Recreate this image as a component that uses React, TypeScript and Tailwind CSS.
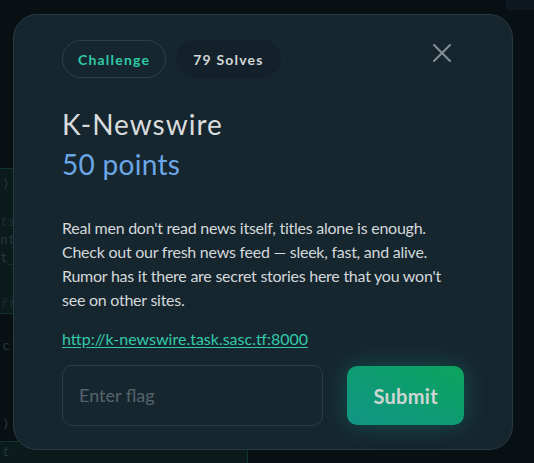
const codeFont = { fontFamily: '"DejaVu Sans Mono", monospace' }

const App = () => {
    return (
        <div className="relative w-[534px] h-[463px] overflow-hidden bg-[#091014]" style={{ fontFamily: 'Lato, "Noto Sans", sans-serif' }}>
            {/* page behind the dialog */}
            <div className="flex flex-col pt-[168px] text-[13px] text-[#26383a]" style={codeFont}>
                <div className="w-[260px] h-[146px] border-y border-[#12342c] bg-[#0b1a1b] pt-[6px] leading-[18px]">
                    <div className="pl-[2px]">)</div>
                    <div className="mt-[20px] italic text-[#1d2e30]">ts room</div>
                    <div>nts roo</div>
                    <div>t_annou</div>
                    <div className="mt-[28px] italic text-[#1d2e30]">fferenc</div>
                </div>
                <div className="mt-[22px] pl-[2px]">c'&#125;)</div>
                <div className="mt-[58px] pl-[2px]">)</div>
                <div className="mt-[8px] w-[248px] h-[30px] border-t border-r border-[#12342c] rounded-tr-[12px] bg-[#0b1b1c] pl-[2px] italic">t</div>
            </div>
            <div className="absolute top-0 right-0 w-[28px] h-[10px] bg-[#0f1820]" />

            {/* dialog */}
            <div className="absolute left-[13px] top-[14px] w-[500px] h-[436px] rounded-[24px] border border-[#283a41] bg-[#16262f] px-[48px] pt-[25px]">
                <div className="flex items-start justify-between">
                    <div className="flex items-center gap-[10px]">
                        <span className="flex h-[38px] items-center rounded-full border border-[#2f3f43] px-[15px] text-[14px] font-bold tracking-[1.2px] text-[#2ec9a7]">Challenge</span>
                        <span className="flex h-[38px] items-center rounded-full bg-[#13222a] px-[17px] text-[14px] font-bold tracking-[1.2px] text-[#d2d6d8]">79 Solves</span>
                    </div>
                    <svg className="mt-[4px] mr-[13px] h-[18px] w-[18px] text-[#858f94]" viewBox="0 0 18 18" fill="none" stroke="currentColor" strokeWidth="2" strokeLinecap="round">
                        <path d="M1 1L17 17M17 1L1 17" />
                    </svg>
                </div>
                <h1 className="mt-[28px] text-[28px] leading-[36px] tracking-[1px] text-[#d9dcdd]">K-Newswire</h1>
                <div className="mt-[4px] text-[28px] leading-[36px] tracking-[0.3px] text-[#6ba6e6]">50 points</div>
                <p className="mt-[34px] text-[16px] leading-[24px] tracking-[-0.25px] text-[#d3d8da]">
                    Real men don't read news itself, titles alone is enough.<br />
                    Check out our fresh news feed — sleek, fast, and alive.<br />
                    Rumor has it there are secret stories here that you won't<br />
                    see on other sites.
                </p>
                <a className="mt-[15px] block text-[16px] leading-[24px] text-[#33c9aa] underline underline-offset-2">http://k-newswire.task.sasc.tf:8000</a>
                <div className="mt-[14px] flex items-center gap-[24px]">
                    <div className="flex h-[61px] w-[262px] items-center rounded-[10px] border border-[#2d3c42] px-[16px] text-[18px] text-[#56646a]">Enter flag</div>
                    <button className="h-[59px] w-[117px] rounded-[10px] bg-gradient-to-tr from-[#139485] to-[#0ba45c] text-[20px] font-bold tracking-[0.3px] text-[#ced6d4] shadow-[0_0_22px_rgba(20,160,140,0.35)]">Submit</button>
                </div>
            </div>
        </div>
    )
}

export default App
